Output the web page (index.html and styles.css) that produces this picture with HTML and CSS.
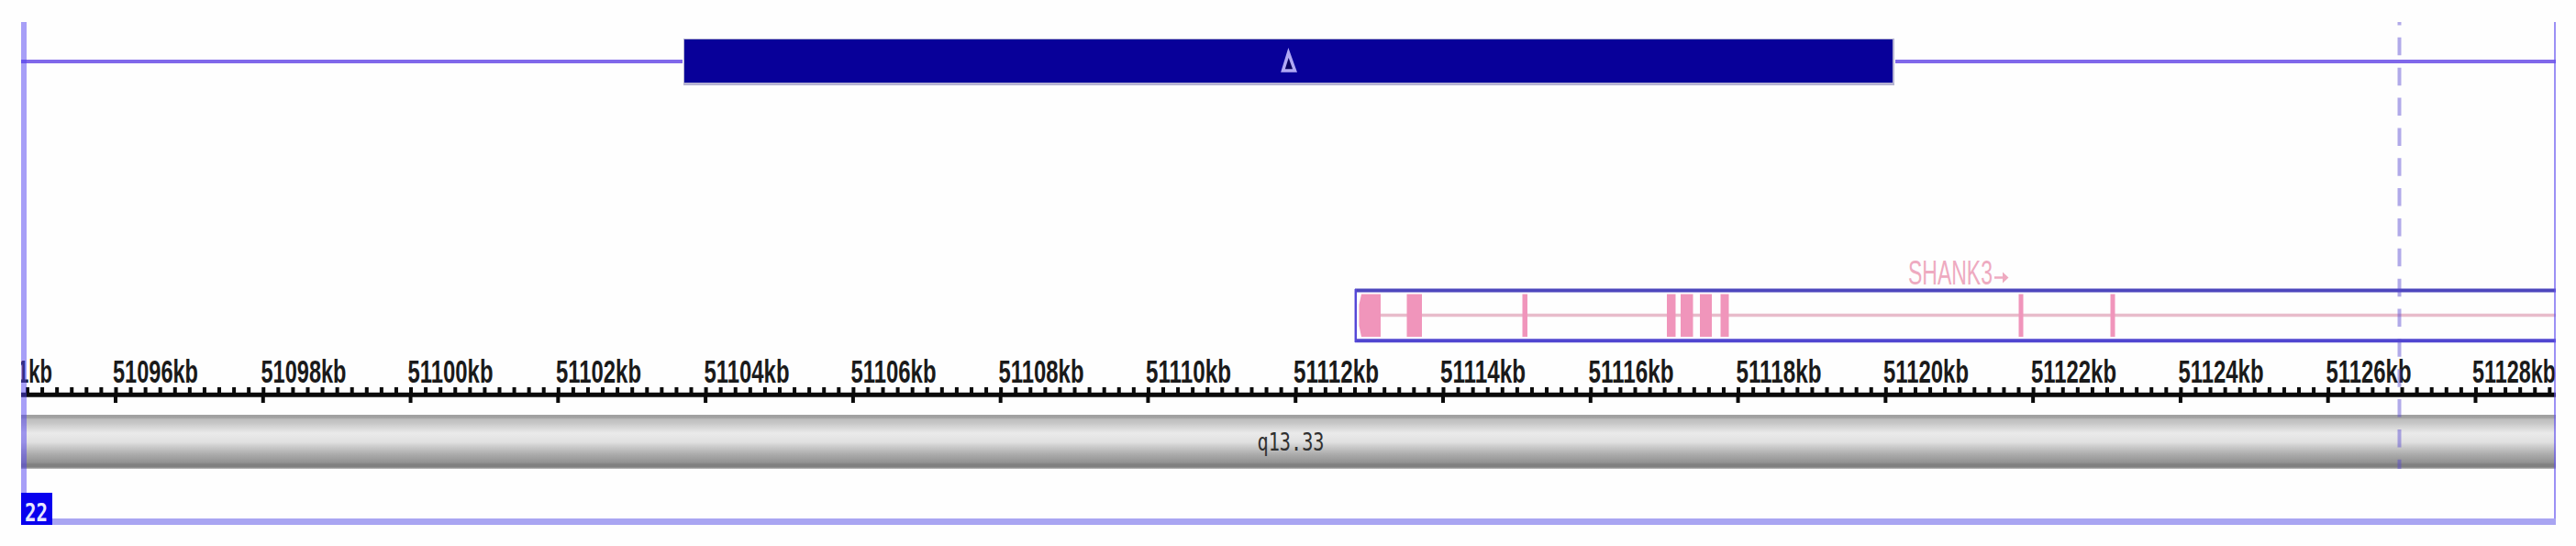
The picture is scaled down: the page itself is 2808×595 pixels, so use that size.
FILE: index.html
```html
<!DOCTYPE html>
<html lang="en">
<head>
<meta charset="utf-8">
<title>Chromosome 22 q13.33</title>
<link rel="stylesheet" href="styles.css">
</head>
<body>
<main class="viewer">
  <svg class="track track-variant" viewBox="23 24 2763 246">
    <path class="variant-line" d="M23 67H744M2066 67H2786"/>
    <rect class="variant-shadow" x="745" y="42" width="1320" height="51"/>
    <rect class="variant" x="746" y="43" width="1317" height="47"/>
    <path class="delta" d="M1404.5 57.500L1398.500 77H1411.500Z"/>
  </svg>
  <svg class="track track-gene" viewBox="23 270 2763 112">
    <text class="gene-name" x="2080" y="309.500" textLength="92" lengthAdjust="spacingAndGlyphs">SHANK3</text>
    <path class="gene-arrow" d="M2174 302.500H2184"/>
    <path class="gene-arrow-head" d="M2183 296.500L2189.500 302.500L2183 308.500Z"/>
    <path class="intron" d="M1484 343.500H2786"/>
    <path class="exon" d="M1484 320.500H1505V367H1484L1481.500 355V332ZM1533.500 320.500h16.500v46.500h-16.500ZM1659.500 320.500h5.500v46.500h-5.500ZM1817 320.500h9.500v46.500h-9.500ZM1832 320.500h13.500v46.500h-13.500ZM1853 320.500h13v46.500h-13ZM1875.500 320.500h9v46.500h-9ZM2200.500 320.500h5v46.500h-5ZM2300.500 320.500h5v46.500h-5Z"/>
    <path class="gene-top" d="M1477 316.500H2786"/>
    <path class="gene-bottom" d="M1477 371.200H2786"/>
    <path class="gene-side" d="M1477.800 315V373"/>
  </svg>
  <svg class="track track-ruler" viewBox="23 382 2763 70">
    <g class="labels">
      <text x="19" y="416.500" textLength="38" lengthAdjust="spacingAndGlyphs">1kb</text>
      <text x="123" y="416.500" textLength="93" lengthAdjust="spacingAndGlyphs">51096kb</text>
      <text x="284.500" y="416.500" textLength="93" lengthAdjust="spacingAndGlyphs">51098kb</text>
      <text x="444.500" y="416.500" textLength="93" lengthAdjust="spacingAndGlyphs">51100kb</text>
      <text x="606" y="416.500" textLength="93" lengthAdjust="spacingAndGlyphs">51102kb</text>
      <text x="767.500" y="416.500" textLength="93" lengthAdjust="spacingAndGlyphs">51104kb</text>
      <text x="927.500" y="416.500" textLength="93" lengthAdjust="spacingAndGlyphs">51106kb</text>
      <text x="1088.500" y="416.500" textLength="93" lengthAdjust="spacingAndGlyphs">51108kb</text>
      <text x="1249" y="416.500" textLength="93" lengthAdjust="spacingAndGlyphs">51110kb</text>
      <text x="1410" y="416.500" textLength="93" lengthAdjust="spacingAndGlyphs">51112kb</text>
      <text x="1570" y="416.500" textLength="93" lengthAdjust="spacingAndGlyphs">51114kb</text>
      <text x="1731.500" y="416.500" textLength="93" lengthAdjust="spacingAndGlyphs">51116kb</text>
      <text x="1892.500" y="416.500" textLength="93" lengthAdjust="spacingAndGlyphs">51118kb</text>
      <text x="2053" y="416.500" textLength="93" lengthAdjust="spacingAndGlyphs">51120kb</text>
      <text x="2214" y="416.500" textLength="93" lengthAdjust="spacingAndGlyphs">51122kb</text>
      <text x="2374.500" y="416.500" textLength="93" lengthAdjust="spacingAndGlyphs">51124kb</text>
      <text x="2535.500" y="416.500" textLength="93" lengthAdjust="spacingAndGlyphs">51126kb</text>
      <text x="2695" y="416.500" textLength="91" lengthAdjust="spacingAndGlyphs">51128kb</text>
    </g>
    <path class="axis" d="M23 430.300H2786"/>
    <path class="minor" d="M28 425.500H2786"/>
    <path class="major" d="M124 435.500H2786"/>
  </svg>
  <div class="band"><svg class="band-svg" viewBox="23 452 2763 59">
    <text class="band-name" x="1370.500" y="491" textLength="73" lengthAdjust="spacingAndGlyphs">q13.33</text>
  </svg></div>
  <div class="footer">
    <svg class="badge" viewBox="0 0 34 35"><text class="badge-text" x="4" y="30.500" textLength="25" lengthAdjust="spacingAndGlyphs">22</text></svg>
    <div class="baseline"></div>
  </div>
  <svg class="overlay" viewBox="23 24 2763 548">
    <path class="edge-left" d="M26 24V537"/>
    <path class="edge-right" d="M2785 24V565"/>
    <path class="cursor" d="M2615.500 8V511"/>
  </svg>
</main>
</body>
</html>
```
FILE: styles.css
```css
body {
  margin: 0;
  background: #fefefe;
}

.viewer {
  position: relative;
  display: flex;
  flex-direction: column;
  width: 2763px;
  height: 548px;
  margin: 24px 22px 0 23px;
}

.track {
  display: block;
  flex: none;
  width: 2763px;
}

.track-variant { height: 246px; }
.track-gene { height: 112px; }
.track-ruler { height: 70px; }

.variant-line {
  stroke: #8068ea;
  stroke-width: 4;
}

.variant-shadow { fill: #b5b3d2; }
.variant { fill: #080099; }

.delta {
  fill: #080060;
  stroke: #b0a8f4;
  stroke-width: 3.5;
}

.gene-name {
  fill: #eeaac0;
  font: 36px "Liberation Sans", Arial, sans-serif;
}

.gene-arrow {
  stroke: #eeaac0;
  stroke-width: 2.5;
}

.gene-arrow-head { fill: #eeaac0; }

.intron {
  stroke: #e8bccb;
  stroke-width: 3.5;
}

.exon { fill: #f095bb; }

.gene-top {
  stroke: #4d46bd;
  stroke-width: 4;
}

.gene-bottom {
  stroke: #5046d0;
  stroke-width: 4;
}

.gene-side {
  stroke: #5548d8;
  stroke-width: 2.5;
}

.labels {
  fill: #1a1a1a;
  font: bold 35px "Liberation Sans", Arial, sans-serif;
}

.axis,
.minor,
.major {
  stroke: #0a0a0a;
}

.axis { stroke-width: 5; }

.minor {
  stroke-width: 7;
  stroke-dasharray: 4 12.078;
}

.major {
  stroke-width: 7;
  stroke-dasharray: 4 156.780;
}

.band {
  flex: none;
  height: 59px;
  background: linear-gradient(#a0a0a0 0 3px, #bebebe 5px, #c6c6c6 9px, #d4d4d4 13px, #eaeaea 20px, #e0e0e0 30px, #cecece 34px, #acacac 43px, #929292 52px, #808080 54px 57px, #c5c5c5 59px);
}

.band-svg {
  display: block;
  width: 2763px;
  height: 59px;
}

.band-name {
  fill: #303030;
  font: 26px "DejaVu Sans Mono", monospace;
}

.footer {
  display: flex;
  align-items: flex-end;
  height: 61px;
}

.badge {
  flex: none;
  width: 34px;
  height: 35px;
  overflow: visible;
  background: #0800ee;
}

.badge-text {
  fill: #e8e8ff;
  font: bold 26px "DejaVu Sans Mono", monospace;
}

.baseline {
  flex: 1;
  height: 7px;
  background: #a9a5f2;
}

.overlay {
  position: absolute;
  inset: 0;
  width: 2763px;
  height: 548px;
}

.edge-left {
  stroke: #5040f0;
  stroke-opacity: .5;
  stroke-width: 6;
}

.edge-right {
  stroke: #6555f0;
  stroke-opacity: .65;
  stroke-width: 2;
}

.cursor {
  stroke: #5545d0;
  stroke-opacity: .45;
  stroke-width: 4;
  stroke-dasharray: 19.500 13.350;
}
```
